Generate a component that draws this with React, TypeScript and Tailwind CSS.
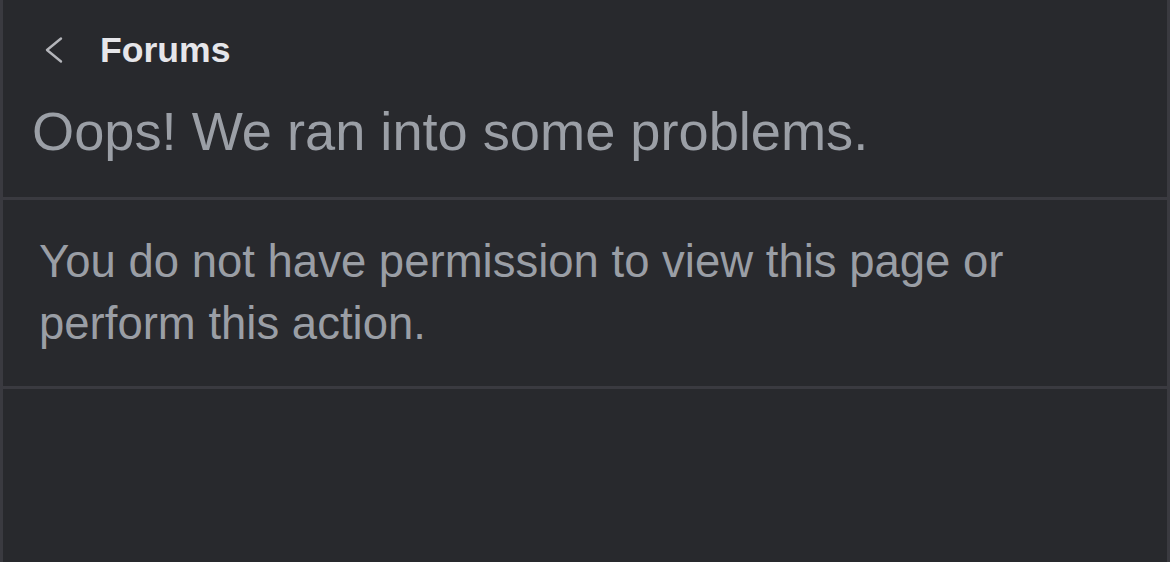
import React from 'react'

// Error page shown inside the forums panel
const App: React.FC = () => {
  return (
    <div className="h-[562px] w-[1170px] overflow-hidden bg-[#28292d] border-x-[3px] border-[#3a3a40] font-['Liberation_Sans',Arial,sans-serif]">
      {/* Header */}
      <div className="h-[200px] border-b-[3px] border-[#3a3a40] pt-[30px]">
        <div className="flex items-center h-[40px]">
          <svg className="ml-[41px]" width="20" height="28" viewBox="0 0 20 28" fill="none">
            <polyline points="17,2.5 3,14 17,25.5" stroke="#b4b5ba" strokeWidth="2.4" strokeLinecap="round" strokeLinejoin="round" />
          </svg>
          <span className="ml-[36px] text-[35.6px] leading-[40px] font-bold text-[#e6e6ea]">Forums</span>
        </div>
        <h1 className="mt-[31px] pl-[29px] text-[54.2px] leading-[60px] text-[#9b9fa6]">Oops! We ran into some problems.</h1>
      </div>
      {/* Message */}
      <div className="h-[189px] border-b-[3px] border-[#3a3a40] pt-[31px] pl-[36px]">
        <p className="text-[45.5px] leading-[62px] text-[#9a9ea5] w-[1010px]">
          You do not have permission to view this page or perform this action.
        </p>
      </div>
    </div>
  )
}

export default App
